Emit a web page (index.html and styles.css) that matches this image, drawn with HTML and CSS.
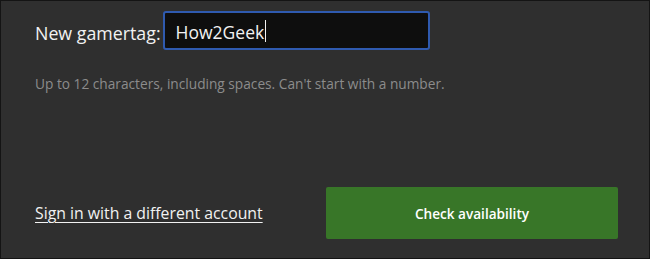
FILE: index.html
```html
<!DOCTYPE html>
<html lang="en">
<head>
    <meta charset="UTF-8">
    <meta name="viewport" content="width=device-width, initial-scale=1.0">
    <title>Change gamertag</title>
    <link rel="stylesheet" href="styles.css">
</head>
<body>

    <div class="gamertag-panel">
        <div class="gamertag-row">
            <label class="gamertag-label" for="gamertag">New gamertag:</label>
            <div class="gamertag-input" id="gamertag">
                <span class="gamertag-value">How2Geek</span><span class="caret"></span>
            </div>
        </div>

        <p class="hint">Up to 12 characters, including spaces. Can't start with a number.</p>

        <div class="actions">
            <a href="#" class="switch-account">Sign in with a different account</a>
            <button class="check-button">Check availability</button>
        </div>
    </div>

</body>
</html>
```

FILE: styles.css
```css
body {
    margin: 0;
    background-color: #111;
    font-family: "Open Sans", "Noto Sans", Arial, sans-serif;
}

.gamertag-panel {
    box-sizing: border-box;
    width: 650px;
    height: 259px;
    border: 1px solid #141414;
    background-color: #2f2f2f;
    padding: 10px 31px 19px 34px;
    display: flex;
    flex-direction: column;
}

.gamertag-row {
    display: flex;
    align-items: center;
}

.gamertag-label {
    color: #f2f2f2;
    font-size: 17.8px;
    margin-right: 2px;
    padding-top: 5px;
}

.gamertag-input {
    box-sizing: border-box;
    width: 267px;
    height: 39px;
    border: 2px solid #2f5aaf;
    border-radius: 3px;
    background-color: #0e0e0e;
    padding: 0 0 0 11px;
    display: flex;
    align-items: center;
    color: #f2f2f2;
    font-size: 17.5px;
}

.gamertag-value {
    padding-top: 3px;
}

.caret {
    display: inline-block;
    width: 1px;
    height: 22px;
    margin-left: 1px;
    background-color: #f2f2f2;
}

.hint {
    margin: 24px 0 0;
    color: #8c8c8c;
    font-size: 13.7px;
}

.actions {
    margin-top: auto;
    display: flex;
    align-items: center;
    justify-content: space-between;
}

.switch-account {
    color: #f2f2f2;
    font-size: 15.8px;
    text-decoration: underline;
    text-underline-offset: 3px;
}

.check-button {
    width: 292px;
    height: 52px;
    border: none;
    border-radius: 2px;
    background-color: #387628;
    color: #fff;
    font-family: inherit;
    font-size: 13.6px;
    font-weight: 600;
    cursor: pointer;
}
```
